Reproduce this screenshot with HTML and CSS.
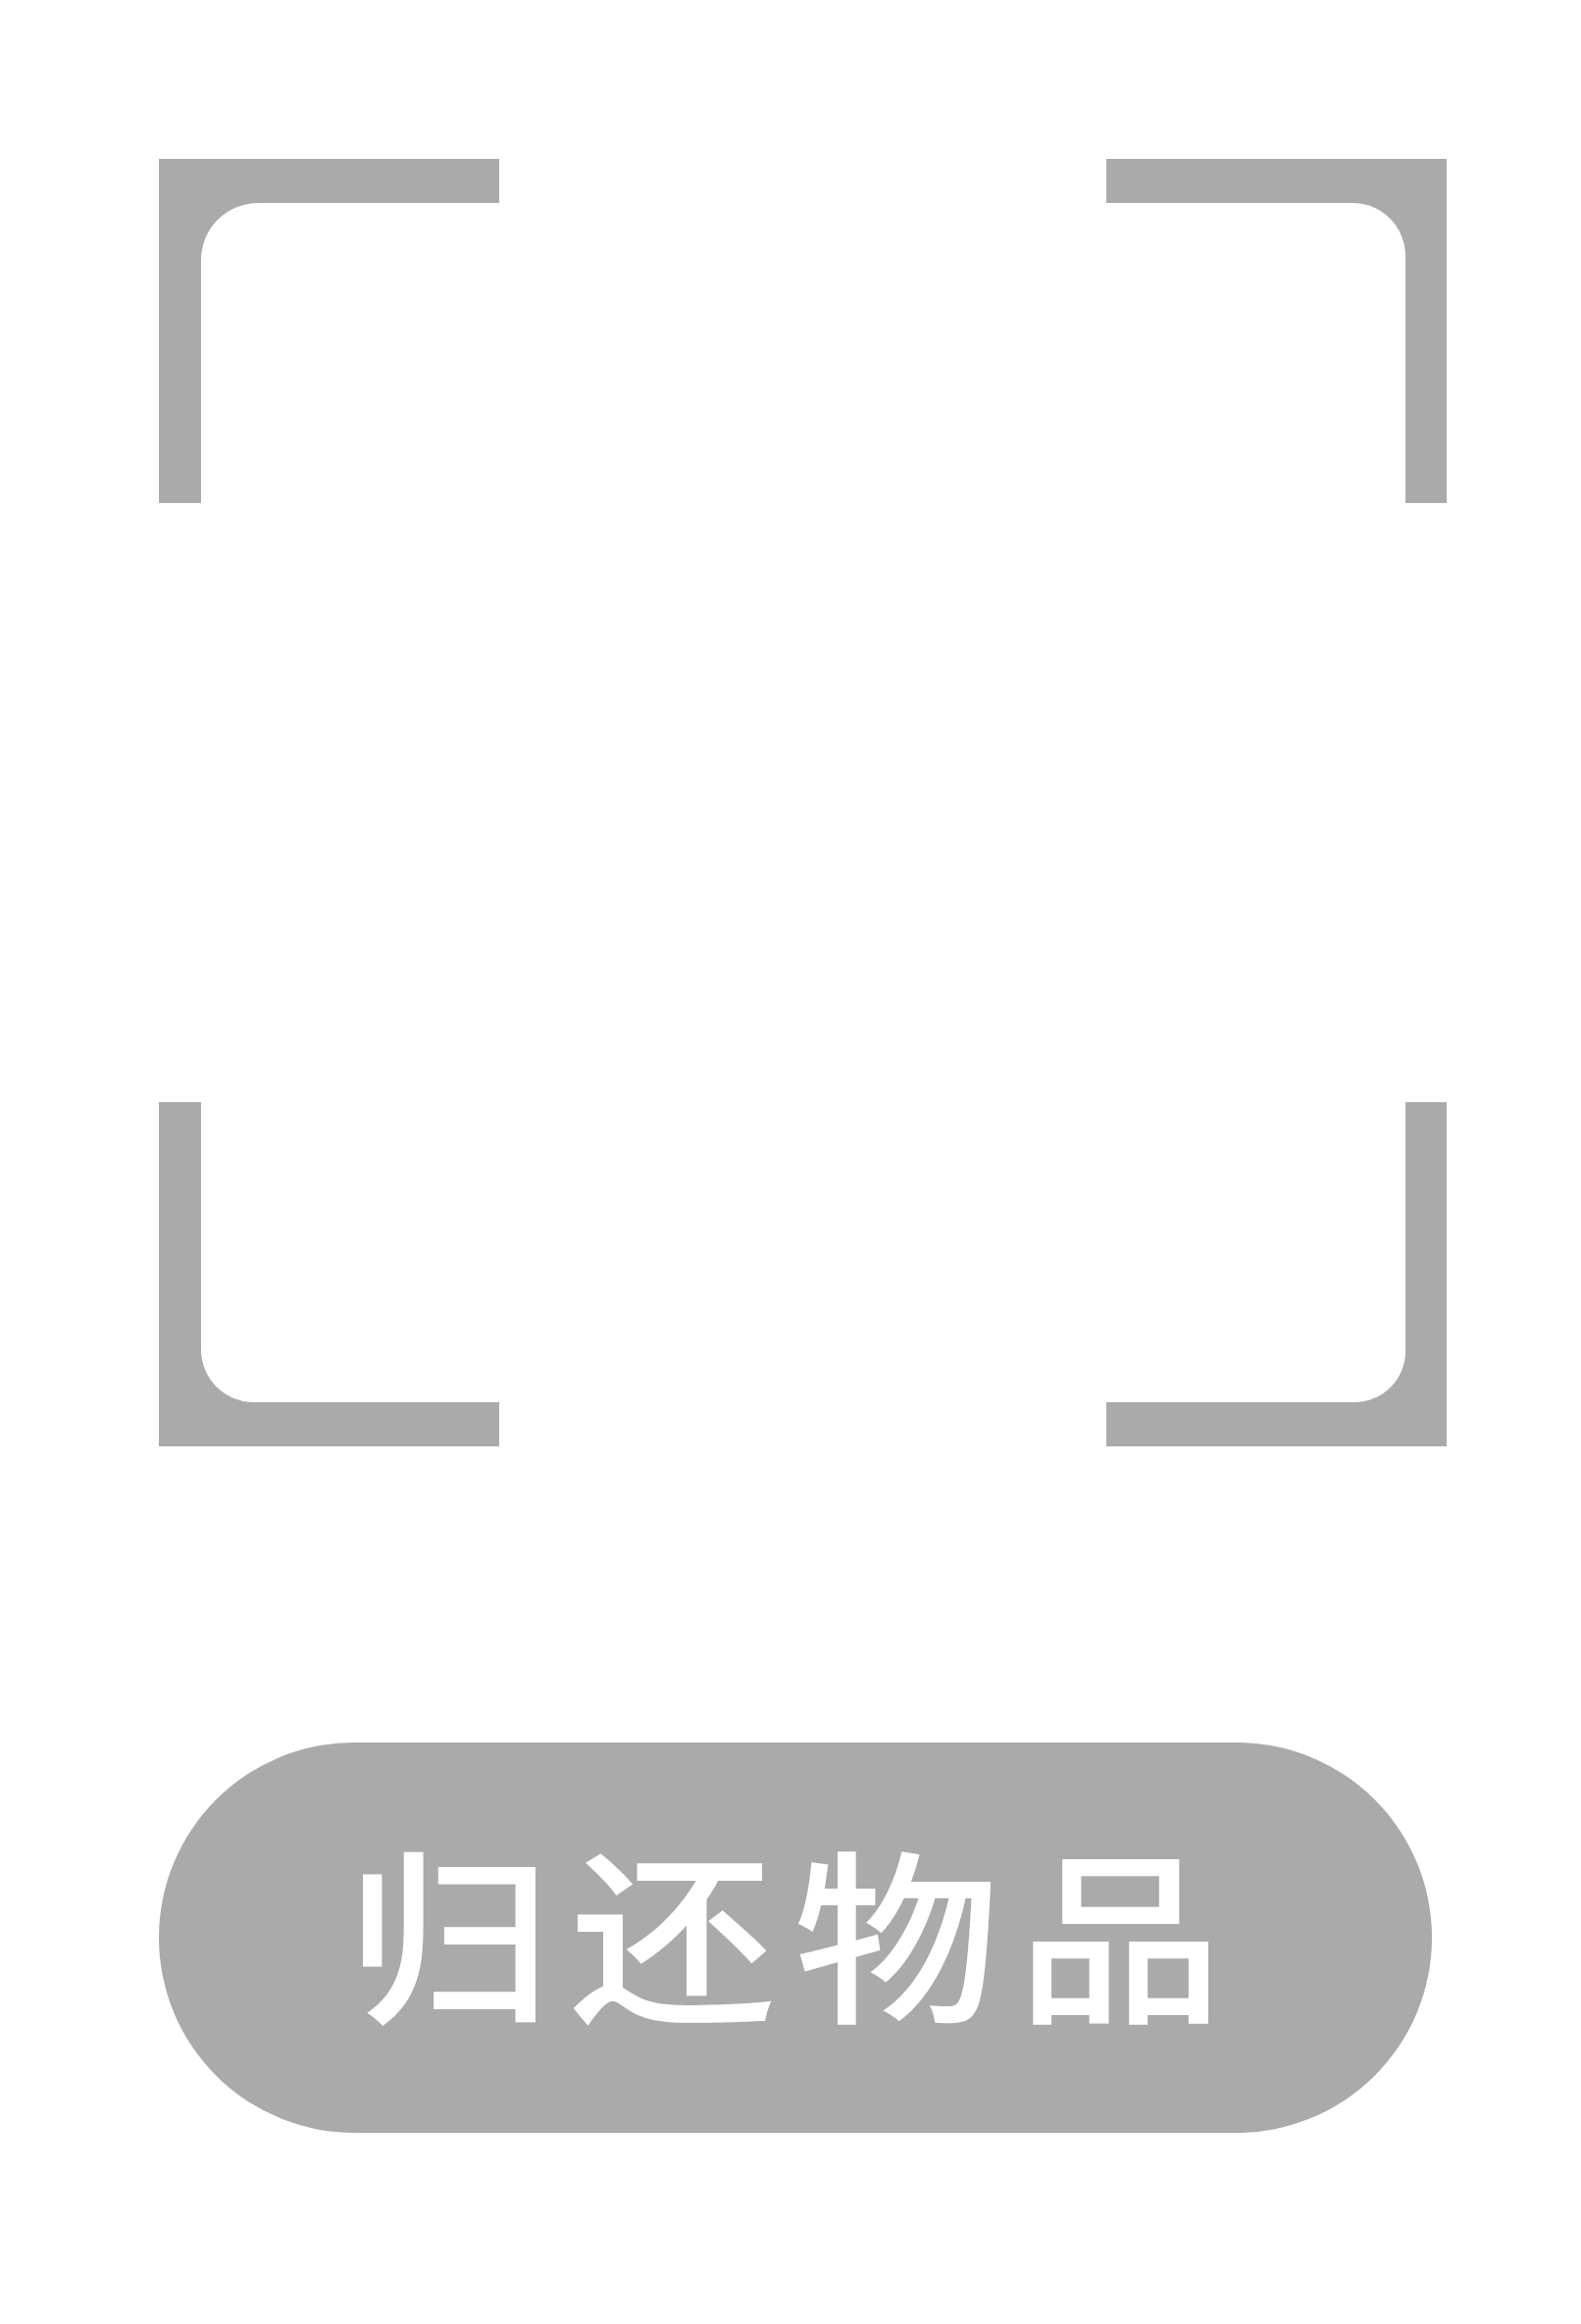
FILE: index.html
```html
<!DOCTYPE html>
<html lang="zh-CN">
<head>
<meta charset="utf-8">
<title>归还物品</title>
<link rel="stylesheet" href="styles.css">
</head>
<body>
<main class="page">
  <section class="scan">
    <div class="corner corner-tl"></div>
    <div class="corner corner-tr"></div>
    <div class="corner corner-bl"></div>
    <div class="corner corner-br"></div>
  </section>
  <button class="return-btn" type="button"><span class="return-label">归还物品</span></button>
</main>
</body>
</html>
```
FILE: styles.css
```css
html, body {
  margin: 0;
  padding: 0;
  background: #ffffff;
}

.page {
  padding: 162px 0 0 162px;
  display: flex;
  flex-direction: column;
  align-items: flex-start;
}

.scan {
  width: 1313px;
  height: 1313px;
  display: grid;
  grid-template-columns: 347px 347px;
  grid-template-rows: 351px 351px;
  justify-content: space-between;
  align-content: space-between;
}

.corner {
  position: relative;
  background: #aaaaaa;
  overflow: hidden;
}

.corner::after {
  content: "";
  position: absolute;
  background: #ffffff;
}

.corner-tl::after {
  left: 43px;
  top: 45px;
  right: 0;
  bottom: 0;
  border-top-left-radius: 58px;
}

.corner-tr::after {
  left: 0;
  top: 45px;
  right: 42px;
  bottom: 0;
  border-top-right-radius: 54px;
}

.corner-bl::after {
  left: 43px;
  top: 0;
  right: 0;
  bottom: 45px;
  border-bottom-left-radius: 54px;
}

.corner-br::after {
  left: 0;
  top: 0;
  right: 42px;
  bottom: 45px;
  border-bottom-right-radius: 52px;
}

.return-btn {
  margin-top: 302px;
  width: 1298px;
  height: 398px;
  border: 0;
  border-radius: 199px;
  background: #aaaaaa;
  color: #ffffff;
  font-family: "Noto Sans CJK SC", "Noto Sans", sans-serif;
  font-size: 210px;
  font-weight: 500;
  line-height: 1;
  padding: 0 4px 0 0;
  display: flex;
  align-items: center;
  justify-content: center;
}

.return-label {
  display: inline-block;
  letter-spacing: 18px;
  transform: translateY(-11px) scaleY(0.9);
}
```
